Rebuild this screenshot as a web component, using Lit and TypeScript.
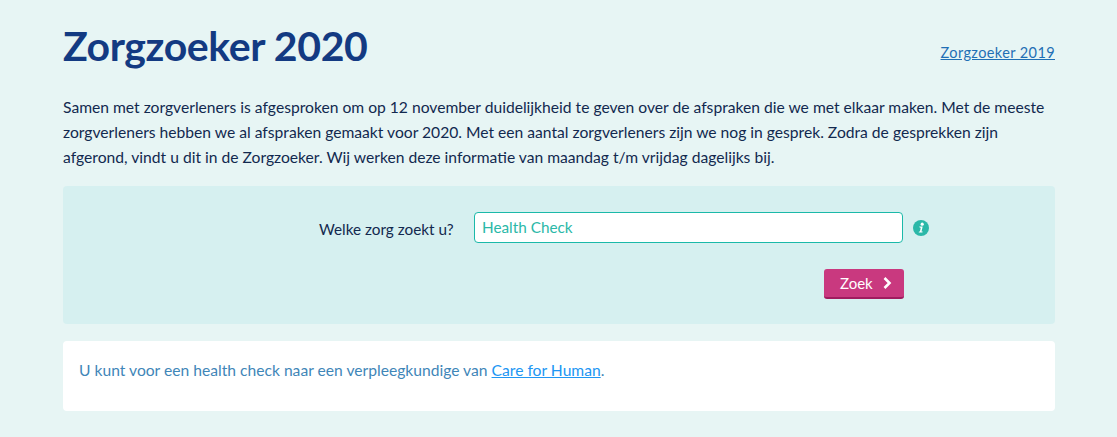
import { LitElement, html, css } from 'lit';
import { customElement } from 'lit/decorators.js';

@customElement('app-root')
export class AppRoot extends LitElement {
  static styles = css`
    :host {
      display: block;
      min-height: 437px;
      background: #e7f5f4;
      font-family: 'Lato', 'Noto Sans', sans-serif;
      font-size: 15.65px;
      color: #12294f;
    }
    .page {
      width: 992px;
      margin-left: 63px;
      padding-top: 20px;
    }
    .head {
      display: flex;
      justify-content: space-between;
      align-items: center;
    }
    h1 {
      margin: 0;
      font-size: 41px;
      line-height: 52px;
      font-weight: 700;
      letter-spacing: -0.4px;
      color: #133a82;
    }
    .head a {
      color: #1f6fb5;
      font-size: 14.5px;
      letter-spacing: 0.4px;
      padding-top: 12px;
    }
    .intro {
      margin: 23px 0 0;
      line-height: 25px;
    }
    .search {
      margin-top: 16px;
      height: 138px;
      box-sizing: border-box;
      background: #d6f0f0;
      border-radius: 4px;
      padding-top: 26px;
    }
    .row {
      display: flex;
      align-items: center;
      padding-left: 256px;
    }
    .row label {
      width: 155px;
      padding-top: 2px;
      font-size: 15.3px;
    }
    .row .input {
      width: 429px;
      height: 31px;
      box-sizing: border-box;
      border: 1px solid #1bb9a9;
      border-radius: 4px;
      background: #fff;
      color: #2bb8a8;
      padding: 0 7px;
      font-size: 15.3px;
      line-height: 29px;
    }
    .row svg {
      margin-left: 10px;
    }
    .actions {
      display: flex;
      justify-content: flex-end;
      padding: 26px 151px 0 0;
    }
    .btn {
      display: flex;
      align-items: center;
      gap: 10px;
      width: 80px;
      height: 30px;
      box-sizing: border-box;
      padding: 0 0 0 16px;
      background: #c9397f;
      border: 0;
      border-bottom: 2px solid #a01c5f;
      border-radius: 3px;
      color: #fff;
      font: inherit;
      font-size: 15px;
    }
    .result {
      margin-top: 17px;
      height: 70px;
      box-sizing: border-box;
      background: #fff;
      border-radius: 4px;
      padding: 20px 16px;
      color: #3f86b8;
    }
    .result a {
      color: #2196f3;
    }
  `;

  render() {
    return html`
      <div class="page">
        <div class="head">
          <h1>Zorgzoeker 2020</h1>
          <a href="#">Zorgzoeker 2019</a>
        </div>
        <p class="intro">
          Samen met zorgverleners is afgesproken om op 12 november duidelijkheid te geven over de afspraken die we met elkaar maken. Met de meeste zorgverleners hebben we al afspraken gemaakt voor 2020. Met een aantal zorgverleners zijn we nog in gesprek. Zodra de gesprekken zijn afgerond, vindt u dit in de Zorgzoeker. Wij werken deze informatie van maandag t/m vrijdag dagelijks bij.
        </p>
        <div class="search">
          <div class="row">
            <label>Welke zorg zoekt u?</label>
            <div class="input">Health Check</div>
            <svg width="16" height="16" viewBox="0 0 16 16">
              <circle cx="8" cy="8" r="8" fill="#2bb8a8"></circle>
              <path d="M6.2 6.6h3.5l-1.200 4.800h1.200l-.3 1.200H5.700l.3-1.200h.9l.9-3.600h-.9z" fill="#fff"></path>
              <circle cx="9.2" cy="4.2" r="1.6" fill="#fff"></circle>
            </svg>
          </div>
          <div class="actions">
            <button class="btn">
              Zoek
              <svg width="9" height="12" viewBox="0 0 9 12">
                <path d="M1.5 1 6.5 6 1.500 11" fill="none" stroke="#fff" stroke-width="2.6"></path>
              </svg>
            </button>
          </div>
        </div>
        <div class="result">
          U kunt voor een health check naar een verpleegkundige van <a href="#">Care for Human</a>.
        </div>
      </div>
    `;
  }
}
